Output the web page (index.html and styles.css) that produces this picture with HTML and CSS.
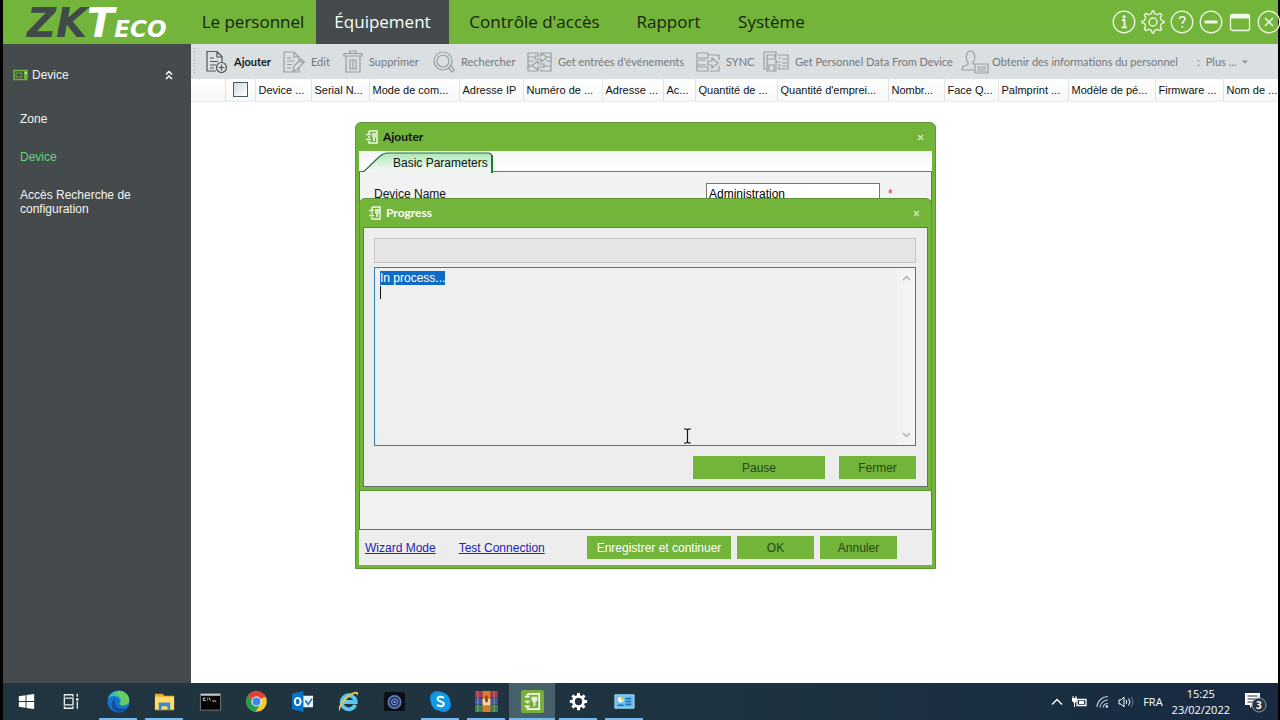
FILE: index.html
```
<!DOCTYPE html>
<html lang="fr">
<head>
<meta charset="utf-8">
<title>ZKTeco</title>
<link rel="stylesheet" href="styles.css">
</head>
<body>
<div class="screen">
<header class="topbar">
  <div class="logo"><span class="logo-zk">ZK</span><span class="logo-t">T</span><span class="logo-eco">ECO</span></div>
  <nav class="menu">
    <button>Le personnel</button>
    <button class="active">Équipement</button>
    <button>Contrôle d'accès</button>
    <button>Rapport</button>
    <button>Système</button>
  </nav>
  <div class="window-tools">
    <button aria-label="Information"><svg viewBox="0 0 24 24"><circle cx="12" cy="12" r="10.8"/><path d="M10 10h2.500v7M9.500 17.300h5.500" stroke-width="1.800"/><circle cx="12" cy="6.800" r="1" fill="#fff"/></svg></button>
    <button aria-label="Paramètres"><svg viewBox="0 0 24 24"><circle cx="12" cy="12" r="4"/><path d="M10.500 3.500 11.300.8h1.400l.8 2.700 3 1.200 2.500-1.400 1.700 1.700-1.400 2.500 1.200 3 2.700.8v1.400l-2.700.8-1.200 3 1.400 2.500-1.700 1.700-2.500-1.400-3 1.200-.8 2.700h-1.400l-.8-2.700-3-1.200-2.500 1.400-1.700-1.700 1.400-2.500-1.200-3L.8 12.700v-1.400l2.700-.8 1.200-3L3.300 5 5 3.300l2.500 1.400z"/></svg></button>
    <button aria-label="Aide"><svg viewBox="0 0 24 24"><circle cx="12" cy="12" r="10.8"/><path d="M9.500 9c0-3 5.500-3 5.500 0 0 2-2.700 2.300-2.700 5M12.300 16v1.800" stroke-width="1.600"/></svg></button>
    <button aria-label="Réduire"><svg viewBox="0 0 24 24"><circle cx="12" cy="12" r="10.8"/><path d="M5.500 12h13" stroke-width="3"/></svg></button>
    <button aria-label="Agrandir"><svg viewBox="0 0 24 24"><rect x="2.500" y="4.500" width="19" height="16" rx="2"/><path d="M3 6.500h18" stroke-width="4"/></svg></button>
    <button aria-label="Fermer"><svg viewBox="0 0 24 24"><circle cx="12" cy="12" r="10.8"/><path d="M8 8l8 8M16 8l-8 8" stroke-width="1.500"/></svg></button>
  </div>
</header>

<div class="body">
  <aside class="sidebar">
    <button class="side-head">
      <svg width="15" height="12" viewBox="0 0 15 12"><path d="M1 1.500h13v9H1z" fill="none" stroke="#6fb33a" stroke-width="1.500"/><path d="M3 4h6v4H3z" fill="none" stroke="#6fb33a"/><path d="M11 2h3v8h-3z" fill="#6fb33a"/><path d="M12 3h1.500v2H12z" fill="#dff3c8"/></svg>
      <span>Device</span>
      <svg class="chev" width="8" height="10" viewBox="0 0 8 10"><path d="M1 4.500l3-3 3 3M1 9l3-3 3 3" fill="none" stroke="#fff" stroke-width="1.500"/></svg>
    </button>
    <ul>
      <li><a href="#">Zone</a></li>
      <li><a href="#" class="current">Device</a></li>
      <li><a href="#">Accès Recherche de configuration</a></li>
    </ul>
  </aside>

  <main class="content">
    <div class="toolbar">
      <button class="enabled"><svg width="22" height="24" viewBox="0 0 22 24"><path d="M10 21H1V1.500h10l5 5V13M11 1.500v5.500h5M4 8h4M4 11.500h8M4 15h6M4 18h4"/><circle cx="15.500" cy="17.500" r="5"/><path d="M15.500 14.500v6M12.500 17.500h6"/></svg>Ajouter</button>
      <button><svg width="22" height="24" viewBox="0 0 22 24"><path d="M16 17v5H1V2h10l5 5v3M11 2v5h5M4 8h4M4 11h7M4 14.500h5M4 18h4M10 21l1-5 7-7 3.500 3-7.500 7.500zM16.500 10.500l3.500 3"/></svg>Edit</button>
      <button><svg width="20" height="24" viewBox="0 0 20 24"><path d="M1 6V3.500h18V6zM7 3.500V1h6v2.500M3 6v16h14V6M7 10v9h6v-9zM10 10v9"/></svg>Supprimer</button>
      <button><svg width="22" height="24" viewBox="0 0 22 24"><circle cx="10" cy="11" r="9"/><circle cx="10" cy="11" r="6"/><path d="M15 17.500l4 4.500 2.500-2-4-4.500"/></svg>Rechercher</button>
      <button><svg width="25" height="22" viewBox="0 0 25 22"><path d="M8 6H1V2h10v3M1 6v4h6M1 10v4h3M3 14H1v6h10v-2M1 16h4M14 4V2h10v4h-4M24 6v4h-5M24 10v10H14v-2M24 15h-7M8 5h6V2l6 4.500-6 4.500V8H8zM17 13h-6v-3l-6 4.500 6 4.500v-3h6z"/></svg>Get entrées d'événements</button>
      <button><svg width="24" height="22" viewBox="0 0 24 22"><path d="M1 2h11v5H1zM10 9H1v5h9M1 14v6h11v-4H1M12 4h11v5M23 15v5h-9M12 10h4V7l6 5-6 5v-3h-4z"/></svg>SYNC</button>
      <button><svg width="26" height="22" viewBox="0 0 26 22"><path d="M1 1h12v5M1 1v17h2M4 4h8v4H4zM4 8v12h9V8M6 19v-5h5v6M15 4h3M15 7h3M13 11h5M15 14h3M18 4h7v14h-9v-3M19 8h5M19 12h5M19 15h5"/></svg>Get Personnel Data From Device</button>
      <button class="wide"><svg width="28" height="24" viewBox="0 0 28 24"><path d="M13 20H1c0-3 1-4 6-5.500V12C4 9 5 1 9.500 1S15 9 12 12v2h3M14 14h13v9H14zM16 17h9M16 19h9M16 21h9"/></svg>Obtenir des informations du personnel</button>
      <button class="more"><span>:</span><span>Plus ...</span><svg width="6" height="4" viewBox="0 0 6 4"><path d="M0 .5h6L3 3.500z" fill="#8b9092" stroke="none"/></svg></button>
    </div>
    <table class="grid">
      <colgroup><col style="width:34px"><col style="width:30px"><col style="width:56px"><col style="width:58px"><col style="width:90px"><col style="width:64px"><col style="width:79px"><col style="width:61px"><col style="width:32px"><col style="width:82px"><col style="width:111px"><col style="width:56px"><col style="width:54px"><col style="width:70px"><col style="width:87px"><col style="width:68px"><col style="width:55px"></colgroup>
      <thead><tr>
        <th></th><th class="check"><input type="checkbox" aria-label="Tout sélectionner"></th><th>Device ...</th><th>Serial N...</th><th>Mode de com...</th><th>Adresse IP</th><th>Numéro de ...</th><th>Adresse ...</th><th>Ac...</th><th>Quantité de ...</th><th>Quantité d'emprei...</th><th>Nombr...</th><th>Face Q...</th><th>Palmprint ...</th><th>Modèle de pé...</th><th>Firmware ...</th><th>Nom de ...</th>
      </tr></thead>
    </table>
  </main>
</div>

<footer class="taskbar">
  <div class="apps">
    <button aria-label="Démarrer"><svg viewBox="0 0 24 24"><path d="M4 6.500l7-1v6H4zM12 5.300l8-1.100v7.300h-8zM4 12.500h7v6l-7-1zM12 12.500h8v7.300l-8-1.100z" fill="#fff"/></svg></button>
    <button aria-label="Vue des tâches"><svg viewBox="0 0 24 24"><path d="M3 5h10M3 19h10M3.500 8.500h9v7h-9zM3.500 5v2M12.500 5v2M3.500 17v2M12.500 17v2M17 4v3M17 12v7.500" fill="none" stroke="#e8edf0" stroke-width="1.400"/><path d="M15.800 8.500h2.400v2.400h-2.400z" fill="#fff"/></svg></button>
    <button class="open" aria-label="Edge"><svg viewBox="0 0 24 24"><circle cx="12" cy="12" r="11.500" fill="#1674cf"/><path d="M1 9C4-1 20-3 23 9c1 5-3 8-8 7-3-1-2-3-1-4 0-6-9-8-13-3z" fill="#38bdb4"/><path d="M14 1c8 1 11 9 8 13-2 2-6 3-8 1-1-1 1-2 1-4 0-4-4-6-7-6 1-2 3-4 6-4z" fill="#69cc62"/><path d="M9 9c-3 5 1 12 12 10-3 4-8 5-12 3-5-3-6-10 0-13z" fill="#124f9e"/></svg></button>
    <button class="open" aria-label="Explorateur"><svg viewBox="0 0 24 24"><path d="M2 4h8l2 2h10v15H2z" fill="#e9a92f"/><path d="M2 7h20v13H2z" fill="#ffdc69"/><path d="M6 13h12v8h-3v-4H9v4H6z" fill="#3f8ccb"/></svg></button>
    <button aria-label="Invite de commandes"><svg viewBox="0 0 24 24"><path d="M1.500 4h21v17h-21z" fill="#050505" stroke="#777"/><path d="M2 4h20v2H2z" fill="#c8cccf"/><path d="M7 8.500H4.500V11H7M9 8v1M9 10v1M10.500 8l1.500 3M14 11.500h4" fill="none" stroke="#ddd"/></svg></button>
    <button aria-label="Chrome"><svg viewBox="0 0 24 24"><circle cx="12" cy="12" r="10.800" fill="#fbc934"/><path d="M12 12L2.650 6.600A10.800 10.800 0 0 1 21.350 6.600z" fill="#e34133"/><path d="M12 7h9.600L21 6H12z" fill="#e34133"/><path d="M2.650 6.600A10.800 10.800 0 0 0 11 22.750L16 14.500l-4-2.500z" fill="#249b50"/><circle cx="12" cy="12" r="5.300" fill="#fff"/><circle cx="12" cy="12" r="4.200" fill="#3f83ed"/></svg></button>
    <button aria-label="Outlook"><svg viewBox="0 0 24 24"><path d="M12 6h11v12H12z" fill="#eaf4fc"/><path d="M15 11l3 4 4-6" fill="none" stroke="#1674c8" stroke-width="1.800"/><path d="M1 4l12-3v22L1 20z" fill="#0873ca"/><ellipse cx="7" cy="12" rx="3" ry="3.800" fill="none" stroke="#fff" stroke-width="2"/></svg></button>
    <button aria-label="Internet Explorer"><svg viewBox="0 0 24 24"><path d="M19 15.500A7.300 7.300 0 1 1 19.500 12.500H6" fill="none" stroke="#5bc8ef" stroke-width="4"/><path d="M3 22C-2 17 13 1 21 2c2 1 1 3 0 4 0-5-8 0-12 5-4 4-6 8-6 11z" fill="#f1c33d"/></svg></button>
    <button aria-label="Caméra"><svg viewBox="0 0 24 24"><rect x="1" y="2" width="22" height="20" rx="2" fill="#0b0f18"/><circle cx="12" cy="12.500" r="6.500" fill="#273f79" stroke="#6b83b4" stroke-width="1.500"/><circle cx="12" cy="12.500" r="3" fill="#142755" stroke="#87a5dc"/><circle cx="12" cy="12.500" r="1" fill="#c7dcff"/></svg></button>
    <button class="open" aria-label="Skype"><svg viewBox="0 0 24 24"><rect x="1" y="1" width="15" height="15" rx="7" fill="#1686d9"/><rect x="8" y="8" width="15" height="15" rx="7" fill="#1686d9"/><circle cx="12" cy="12" r="10" fill="#0c9be8"/><path d="M15.500 8.500C14 6.500 9 6.500 9 9.300c0 3.200 6.500 2 6.500 5.200 0 3-5.500 2.900-7 .7" fill="none" stroke="#fff" stroke-width="2.200"/></svg></button>
    <button class="open" aria-label="WinRAR"><svg viewBox="0 0 24 24"><path d="M0 1h24v7H0z" fill="#a83349"/><path d="M0 8.500h24v6.500H0z" fill="#4355a5"/><path d="M0 15.500h24V23H0z" fill="#36804a"/><path d="M3 1v22M20 1v22" stroke="#cfb6b8" opacity=".6"/><path d="M8 1h8v22H8z" fill="#dd7a28"/><path d="M8 9.500V16h8V9.500h-2.500V13h-3V9.500z" fill="#f4ddab"/><path d="M11 6h2v6h-2z" fill="#6b3b1c"/></svg></button>
    <button class="open focused" aria-label="ZKAccess"><svg viewBox="0 0 24 24"><rect width="24" height="24" rx="3" fill="#79ae3d"/><path d="M7 4h12v16H7v-3M7 14v-3M7 8V4M4 7h5M4 12h5M4 17h5" fill="none" stroke="#f4faec" stroke-width="1.800"/><path d="M11 7h6v4l-2 2v4h-2v-4l-2-2z" fill="#e6f0da"/></svg></button>
    <button class="open" aria-label="Paramètres"><svg viewBox="0 0 24 24"><circle cx="12" cy="12" r="5.300" fill="none" stroke="#fff" stroke-width="3"/><path d="M12 3v3M12 18v3M3 12h3M18 12h3M5.600 5.600l2.200 2.200M16.200 16.200l2.200 2.200M5.600 18.400l2.200-2.200M16.200 7.800l2.200-2.200" stroke="#fff" stroke-width="3"/></svg></button>
    <button class="open" aria-label="Panneau"><svg viewBox="0 0 24 24"><path d="M2 5h20v14H2z" fill="#6cc0ee" stroke="#a5daf5"/><circle cx="8" cy="10" r="3" fill="#f6f3d9"/><path d="M8 10V7a3 3 0 0 1 3 3z" fill="#eab437"/><path d="M13 9h6M13 12h6M13 15h6M5 16h6" stroke="#1e72b3" stroke-width="1.600"/></svg></button>
  </div>
  <div class="tray">
    <svg width="12" height="8" viewBox="0 0 12 8"><path d="M1 6.500l5-5 5 5" fill="none" stroke="#fff" stroke-width="1.400"/></svg>
    <svg width="15" height="12" viewBox="0 0 15 12"><path d="M5 3.500h9v6H5z" fill="none" stroke="#fff" stroke-width="1.300"/><path d="M7 5h5v3H7zM0 2h5v3L3 7H2L0 5z" fill="#fff"/><path d="M1 0v2M4 0v2M2.500 6v5" stroke="#fff"/></svg>
    <svg width="13" height="13" viewBox="0 0 13 13"><path d="M1 12A11 11 0 0 1 12 1.500M4 12.500a8 8 0 0 1 8-7.500M7 12.500A5 5 0 0 1 12 8.500" fill="none" stroke="#b8c1cc" stroke-width="1.200"/><circle cx="10.800" cy="11.500" r="1.200" fill="#fff"/></svg>
    <svg width="16" height="12" viewBox="0 0 16 12"><path d="M1 4h2l3-3v10L3 8H1z" fill="none" stroke="#fff"/><path d="M8 4q1.500 2 0 4M10.500 2.500q3 3.500 0 7" fill="none" stroke="#fff"/><path d="M13 1q4 5 0 10" fill="none" stroke="#718094"/></svg>
    <span class="lang">FRA</span>
    <time class="clock">15:25<br>23/02/2022</time>
    <button class="notes" aria-label="Notifications"><svg width="24" height="22" viewBox="0 0 24 22"><path d="M1 2h15v12H9l-3 3v-3H1z" fill="#fff"/><path d="M3.500 5h10M3.500 8h10M3.500 11h7" stroke="#1b3045"/><circle cx="15" cy="14" r="7" fill="#2a343e" stroke="#939ba2"/></svg><b>3</b></button>
  </div>
</footer>
</div>

<section class="dialog outer" aria-label="Ajouter">
  <div class="titlebar"><svg width="12" height="14" viewBox="0 0 12 14"><path d="M3 1h8v12H3v-2M3 8V6M3 4V1M0 4.500h5M0 9.500h5" fill="none" stroke="#f0f7e8" stroke-width="1.500"/><path d="M6 3h4v4L9 8v3H7V8L6 7z" fill="#d9ebc6"/></svg><h2>Ajouter</h2><button class="x" aria-label="Fermer"><svg width="7" height="7" viewBox="0 0 7 7"><path d="M1 1l5 5M6 1L1 6" stroke="#d5e9c3" stroke-width="1.300"/></svg></button></div>
  <div class="tabs">
    <button class="tab"><svg width="133" height="22" viewBox="0 0 133 22"><defs><linearGradient id="tabfill" x1="0" y1="0" x2="0" y2="1"><stop offset="0" stop-color="#a9e8b5"/><stop offset=".8" stop-color="#f0f5f0"/></linearGradient></defs><path d="M2 21.500L18 6q4-4 9-4h100q3 0 3 4v16z" fill="url(#tabfill)"/><path d="M0 20.500h3L18 6q4-4 9-4h100q3 0 4 3" fill="none" stroke="#256f36" stroke-width="1.200"/><path d="M131 4v18" stroke="#11812c" stroke-width="2"/></svg><span>Basic Parameters</span></button>
  </div>
  <div class="panel">
    <div class="field"><label for="name">Device Name</label><input id="name" type="text" value="Administration"><span class="star">*</span></div>
  </div>
  <div class="foot"><a href="#">Wizard Mode</a><a href="#">Test Connection</a><button class="btn save">Enregistrer et continuer</button><button class="btn">OK</button><button class="btn">Annuler</button></div>
</section>

<section class="dialog progress" aria-label="Progress">
  <div class="titlebar"><svg width="12" height="14" viewBox="0 0 12 14"><path d="M3 1h8v12H3v-2M3 8V6M3 4V1M0 4.500h5M0 9.500h5" fill="none" stroke="#f0f7e8" stroke-width="1.500"/><path d="M6 3h4v4L9 8v3H7V8L6 7z" fill="#d9ebc6"/></svg><h2>Progress</h2><button class="x" aria-label="Fermer"><svg width="7" height="7" viewBox="0 0 7 7"><path d="M1 1l5 5M6 1L1 6" stroke="#d5e9c3" stroke-width="1.300"/></svg></button></div>
  <div class="inner">
    <div class="bar" role="progressbar" aria-label="Progress"></div>
    <div class="log">
      <textarea id="log" aria-label="Journal" spellcheck="false">In process...</textarea>
      <span class="caret"></span>
      <div class="scroll"><svg width="9" height="6" viewBox="0 0 9 6"><path d="M1 5l3.500-3.500L8 5" fill="none" stroke="#aeb2b6" stroke-width="1.500"/></svg><svg width="9" height="6" viewBox="0 0 9 6"><path d="M1 1l3.500 3.500L8 1" fill="none" stroke="#aeb2b6" stroke-width="1.500"/></svg></div>
    </div>
    <div class="actions"><button class="btn pause">Pause</button><button class="btn">Fermer</button></div>
  </div>
</section>
<svg class="cursor" width="9" height="16" viewBox="0 0 9 16"><path d="M1 1h2.500l1 1 1-1H8M4.500 2v12M1 15h2.500l1-1 1 1H8" fill="none" stroke="#111" stroke-width="1.200"/></svg>
<script src="app.js"></script>
</body>
</html>
```
FILE: app.js
```
const log = document.getElementById('log');
log.focus();
log.setSelectionRange(0, log.value.length);
```
FILE: styles.css
```
* { box-sizing: border-box; }
body { margin: 0; background: #000; font: 12px/14px "Liberation Sans", Arial, sans-serif; color: #111; }
button { font: inherit; color: inherit; background: none; border: 0; padding: 0; margin: 0; }
h2 { margin: 0; font: 700 12px/14px Lato, sans-serif; }
.screen { display: flex; flex-direction: column; height: 100vh; padding: 0 2px 0 3px; overflow: hidden; }

.topbar { display: flex; height: 44px; background: #73b43b; }
.logo { flex: none; width: 187px; padding-left: 24px; font: italic 700 40px/47px "DejaVu Sans", sans-serif; color: #fff; white-space: nowrap; }
.logo-zk { color: #404a49; }
.logo-eco { font-size: 23px; }
.menu { display: grid; grid-template-columns: 126px 133px 171px 97px 109px; flex: 1; font: 17px/44px "Open Sans", sans-serif; color: #16230d; }
.menu .active { background: #454b4c; color: #fff; }
.window-tools { display: flex; gap: 5px; align-items: center; margin-right: -3px; }
.window-tools button { width: 24px; height: 24px; }
.window-tools svg { display: block; width: 24px; height: 24px; fill: none; stroke: #f2f9ea; stroke-width: 1.300; }

.body { display: flex; flex: 1; min-height: 0; }
.sidebar { flex: none; width: 188px; background: #454b4c; color: #f2f4f4; }
.side-head { display: flex; align-items: center; gap: 4px; width: 100%; padding: 24px 18px 0 10px; }
.side-head .chev { margin-left: auto; }
.sidebar ul { list-style: none; margin: 0; padding: 30px 40px 0 17px; display: flex; flex-direction: column; gap: 24px; }
.sidebar a { display: block; color: inherit; text-decoration: none; }
.sidebar .current { color: #64d27b; }

.content { flex: 1; min-width: 0; background: #fff; overflow: hidden; }
.toolbar { display: grid; grid-template-columns: 77px 60px 90px 94px 169px 67px 198px 236px auto; height: 35px; padding-left: 15px; background: radial-gradient(circle, #8d9698 1px, transparent 1px) 3px 4px / 4px 4px no-repeat, #dadfe1; color: #74797b; font: 11px/16px Lato, sans-serif; }
.toolbar { background: repeating-linear-gradient(#9ea6a8 0 1px, transparent 1px 3px) 3px 4px / 1px 27px no-repeat, #dadfe1; }
.toolbar button { display: flex; align-items: center; gap: 6px; white-space: nowrap; }
.toolbar .wide { gap: 3px; }
.toolbar svg { flex: none; fill: none; stroke: #999fa1; stroke-width: 1.200; }
.toolbar .enabled { color: #15191b; font-weight: 700; }
.toolbar .enabled svg { stroke: #50585a; }
.grid { width: 100%; table-layout: fixed; border-collapse: collapse; }
.grid th { height: 22px; padding: 0 0 0 3px; text-align: left; font-weight: 400; font-size: 11px; white-space: nowrap; overflow: hidden; border-right: 1px solid #e1e4e5; border-bottom: 1px solid #e8eaeb; background: linear-gradient(#fff, #f6f7f7); }
.grid .check { padding: 0 7px; }
.grid input { display: block; appearance: none; width: 15px; height: 15px; margin: 0; border: 1px solid #4a5a66; background: linear-gradient(135deg, #d5dade, #fff); }

.taskbar { display: flex; justify-content: space-between; height: 37px; background: linear-gradient(90deg, #20353f, #1e3340 55%, #172a42); color: #fff; }
.apps { display: flex; }
.apps button { width: 46px; display: grid; place-items: center; }
.apps svg { width: 23px; height: 23px; }
.apps .open { background: linear-gradient(#76b9ed, #76b9ed) bottom / 38px 2px no-repeat; }
.apps .focused { background-color: #48606a; background-size: 46px 2px; }
.tray { display: flex; align-items: center; gap: 9px; padding-right: 10px; font: 11px/16px "Open Sans", sans-serif; }
.clock { text-align: center; }
.notes { position: relative; width: 24px; height: 22px; margin-left: 5px; }
.notes svg { display: block; }
.notes b { position: absolute; left: 12px; top: 7px; font-size: 10px; line-height: 14px; }

.dialog { position: absolute; display: flex; flex-direction: column; background: #73b43b; border: 1px solid #5f9436; border-radius: 6px 6px 0 0; }
.titlebar { display: flex; align-items: center; flex: none; }
.x { margin-left: auto; display: grid; place-items: center; width: 15px; height: 15px; }
.outer { left: 355px; top: 122px; width: 581px; height: 447px; padding: 0 3px 3px; }
.outer .titlebar { height: 28px; gap: 5px; padding: 0 4px 0 7px; }
.tabs { height: 21px; background: linear-gradient(#f5f5f5, #fff); border-bottom: 1px solid #4b8f54; }
.tab { position: relative; display: block; width: 133px; height: 21px; margin-left: 2px; }
.tab svg { display: block; }
.tab span { position: absolute; left: 32px; top: 5px; white-space: nowrap; }
.panel { flex: 1; background: #f2f2f2; border: 1px solid #3f8c49; border-top: 0; margin: 0; padding: 11px 14px; }
.field { display: flex; align-items: center; }
.field label { flex: none; width: 332px; }
.field input { width: 174px; height: 21px; border: 1px solid #777; padding: 0 2px; font: inherit; background: #fff; }
.star { margin-left: 8px; color: #d03030; }
.foot { display: flex; align-items: center; height: 35px; padding: 0 35px 0 6px; background: #ededed; }
.foot a { color: #2222b4; margin-right: 23px; white-space: nowrap; }
.btn { width: 77px; height: 23px; background: #73b43b; color: #25480f; }
.foot .btn { margin-left: 6px; }
.foot .save { width: 144px; margin-left: auto; color: #fff; }

.progress { left: 359px; top: 198px; width: 573px; height: 293px; padding: 0 3px 3px; }
.progress .titlebar { height: 28px; gap: 5px; padding: 0 4px 0 6px; color: #fff; }
.inner { flex: 1; display: flex; flex-direction: column; padding: 10px 11px 7px 10px; background: #ededed; border: 1px solid #68716a; }
.bar { height: 25px; background: #e5e5e5; border: 1px solid #c4c4c4; }
.log { position: relative; flex: 1; display: flex; margin: 4px 0 10px; border: 1px solid #2f7fb0; background: #efefef; }
.log textarea { flex: 1; resize: none; border: 0; outline: 0; padding: 3px 5px; margin: 0; font: inherit; background: transparent; overflow: hidden; }
.log textarea::selection { background: #0c6cc8; color: #fff; }
.caret { position: absolute; left: 5px; top: 18px; width: 1px; height: 13px; background: #111; }
.scroll { display: flex; flex-direction: column; justify-content: space-between; align-items: center; width: 18px; padding: 7px 0; background: #f3f3f3; }
.actions { display: flex; justify-content: flex-end; gap: 14px; }
.pause { width: 132px; }
.cursor { position: absolute; left: 683px; top: 428px; }
```
